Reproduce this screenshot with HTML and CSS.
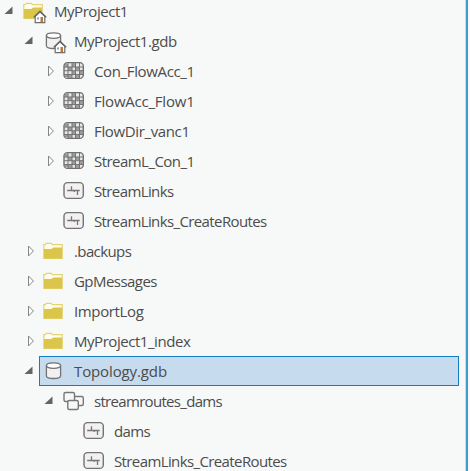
FILE: index.html
```
<!DOCTYPE html>
<html lang="en">
<head>
<meta charset="utf-8">
<title>Catalog</title>
<link rel="stylesheet" href="styles.css">
</head>
<body>
<svg class="defs" aria-hidden="true">
  <symbol id="open" viewBox="0 0 16 30"><path d="M12.5 10.5V18H4.5Z" fill="#646464"/></symbol>
  <symbol id="closed" viewBox="0 0 16 30"><path d="M8.5 10V20L13.4 15Z" fill="#fff" stroke="#858585"/></symbol>
  <symbol id="folder" viewBox="0 0 24 30"><path d="M.8 22.3V8.7H2.2L3.3 7.3H8.2L9.4 8.7H19.3V22.3Z" fill="#fffdec" stroke="#e2d477" stroke-width="1.2"/><path d="M1 13H8.3L10.3 11.5H19V22.5H1Z" fill="#dbc54a"/></symbol>
  <symbol id="house" viewBox="0 0 14 14"><path d="M2.2 6.2V12.7H11.8V6.2L7 1.8Z" fill="#fff" stroke="#6c6c6c" stroke-width="1.2"/><path d="M.8 7.2 7 1.3 13.2 7.2" fill="none" stroke="#686868" stroke-width="1.5"/><path d="M7.5 7H10V12.2H7.5Z" fill="#bd7837"/><path d="M4.2 7.4H6V9.6H4.2Z" fill="#8098a8"/></symbol>
  <symbol id="cylinder" viewBox="0 0 24 30"><path d="M3.4 9.5V19.7C3.4 23.4 17.6 23.4 17.6 19.7V9.5" fill="#f2f0f0" stroke="#737373" stroke-width="1.3"/><ellipse cx="10.5" cy="9.6" rx="7.1" ry="2.7" fill="#fff" stroke="#737373" stroke-width="1.3"/></symbol>
  <symbol id="raster" viewBox="0 0 24 30"><rect x="1" y="6.6" width="19.3" height="15.8" rx="3.5" fill="#e7e7e7" stroke="#707070" stroke-width="1.4"/><path d="M2 8H5V11H2ZM9 7H12V11H9ZM5 11H9V15H5ZM13 11H16V14H13ZM16 14H20V18H16ZM9 15H12V18H9ZM2 18H5V21H2ZM5 19H9V22H5ZM13 18H16V22H13Z" fill="#9b9b9b"/><path d="M5 7V22.5M9 7V22.5M12.5 7V22.5M16.5 7V22.5M1 11H20M1 14.7H20M1 18.5H20" stroke="#747474" stroke-width="1" fill="none"/></symbol>
  <symbol id="table" viewBox="0 0 24 30"><rect x="1" y="6.6" width="19.3" height="15.8" rx="3.5" fill="#f2f0f0" stroke="#737373" stroke-width="1.4"/><path d="M4.2 14.5H16.7M8.5 10.3V14.5M11.3 14.5V16M14.5 14.5V19" fill="none" stroke="#777" stroke-width="1.3"/></symbol>
  <symbol id="dataset" viewBox="0 0 24 30"><g fill="#f7f8f7" stroke="#777" stroke-width="1.4"><rect x="10" y="10.5" width="10.3" height="9" rx="1.5"/><rect x="1" y="6.5" width="10.5" height="9" rx="1.5"/><rect x="4.8" y="14.5" width="10.5" height="9" rx="1.5"/></g></symbol>
</svg>
<main class="pane">
<ul class="tree">
  <li class="row"><svg class="arrow"><use href="#open"/></svg><div class="item"><span class="icon"><svg class="glyph"><use href="#folder"/></svg><svg class="home"><use href="#house"/></svg></span><span class="label">MyProject1</span></div></li>
  <li class="row l1"><svg class="arrow"><use href="#open"/></svg><div class="item"><span class="icon"><svg class="glyph"><use href="#cylinder"/></svg><svg class="home"><use href="#house"/></svg></span><span class="label">MyProject1.gdb</span></div></li>
  <li class="row l2"><svg class="arrow"><use href="#closed"/></svg><div class="item"><span class="icon"><svg class="glyph"><use href="#raster"/></svg></span><span class="label loose">Con_FlowAcc_1</span></div></li>
  <li class="row l2"><svg class="arrow"><use href="#closed"/></svg><div class="item"><span class="icon"><svg class="glyph"><use href="#raster"/></svg></span><span class="label looser">FlowAcc_Flow1</span></div></li>
  <li class="row l2"><svg class="arrow"><use href="#closed"/></svg><div class="item"><span class="icon"><svg class="glyph"><use href="#raster"/></svg></span><span class="label loose">FlowDir_vanc1</span></div></li>
  <li class="row l2"><svg class="arrow"><use href="#closed"/></svg><div class="item"><span class="icon"><svg class="glyph"><use href="#raster"/></svg></span><span class="label snug">StreamL_Con_1</span></div></li>
  <li class="row l2"><svg class="arrow"></svg><div class="item"><span class="icon"><svg class="glyph"><use href="#table"/></svg></span><span class="label tight">StreamLinks</span></div></li>
  <li class="row l2"><svg class="arrow"></svg><div class="item"><span class="icon"><svg class="glyph"><use href="#table"/></svg></span><span class="label tight">StreamLinks_CreateRoutes</span></div></li>
  <li class="row l1"><svg class="arrow"><use href="#closed"/></svg><div class="item"><span class="icon"><svg class="glyph"><use href="#folder"/></svg></span><span class="label tight">.backups</span></div></li>
  <li class="row l1"><svg class="arrow"><use href="#closed"/></svg><div class="item"><span class="icon"><svg class="glyph"><use href="#folder"/></svg></span><span class="label snug">GpMessages</span></div></li>
  <li class="row l1"><svg class="arrow"><use href="#closed"/></svg><div class="item"><span class="icon"><svg class="glyph"><use href="#folder"/></svg></span><span class="label loose">ImportLog</span></div></li>
  <li class="row l1"><svg class="arrow"><use href="#closed"/></svg><div class="item"><span class="icon"><svg class="glyph"><use href="#folder"/></svg></span><span class="label">MyProject1_index</span></div></li>
  <li class="row l1"><svg class="arrow"><use href="#open"/></svg><div class="item selected"><span class="icon"><svg class="glyph"><use href="#cylinder"/></svg></span><span class="label loosest">Topology.gdb</span></div></li>
  <li class="row l2"><svg class="arrow"><use href="#open"/></svg><div class="item"><span class="icon"><svg class="glyph"><use href="#dataset"/></svg></span><span class="label tighter">streamroutes_dams</span></div></li>
  <li class="row l3"><svg class="arrow"></svg><div class="item"><span class="icon"><svg class="glyph"><use href="#table"/></svg></span><span class="label tight">dams</span></div></li>
  <li class="row l3"><svg class="arrow"></svg><div class="item"><span class="icon"><svg class="glyph"><use href="#table"/></svg></span><span class="label tight">StreamLinks_CreateRoutes</span></div></li>
</ul>
</main>
</body>
</html>
```
FILE: styles.css
```
* { box-sizing: border-box; }
body { margin: 0; background: #f7f9f8; overflow: hidden; }
.defs { display: none; }
.pane {
  width: 468px;
  height: 471px;
  overflow: hidden;
  border-right: 2px solid #3f9ad3;
  box-shadow: inset -1px 0 #c5dbee;
}
.tree {
  list-style: none;
  margin: -4px 7px 0 0;
  padding: 0;
  font: 15px/30px "Open Sans", "Noto Sans", sans-serif;
  letter-spacing: -0.45px;
  color: #4c4c4c;
}
.row { display: flex; height: 30px; }
.l1 { padding-left: 20px; }
.l2 { padding-left: 40px; }
.l3 { padding-left: 60px; }
.arrow { flex: none; width: 16px; height: 30px; }
.item {
  flex: 1;
  display: flex;
  margin-left: 3px;
  border: 1px solid transparent;
  padding-left: 3px;
}
.selected { background: #c6dbee; border-color: #147dc1; }
.icon { position: relative; flex: none; width: 31px; height: 30px; margin-top: -1px; }
.glyph { display: block; width: 24px; height: 30px; }
.home { position: absolute; left: 10px; top: 14px; width: 14px; height: 14px; }
.label { white-space: nowrap; margin-top: -1px; }
.tighter { letter-spacing: -0.69px; }
.tight { letter-spacing: -0.61px; }
.snug { letter-spacing: -0.54px; }
.loose { letter-spacing: -0.36px; }
.looser { letter-spacing: -0.22px; }
.loosest { letter-spacing: -0.12px; }
```
